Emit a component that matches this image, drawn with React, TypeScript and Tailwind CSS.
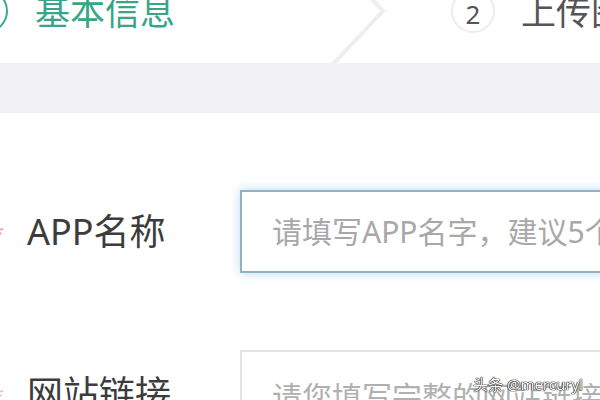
export default function App() {
  const font = "font-['Noto_Sans','Noto_Sans_CJK_SC',sans-serif]";

  return (
    <div className={`relative w-[600px] h-[400px] overflow-hidden bg-white ${font}`}>
      {/* step bar */}
      <div className="relative h-[63px] overflow-hidden bg-white">
        <div className="flex items-center h-[44px] -mt-[11px]">
          <div className="-ml-[36px] w-[44px] h-[44px] shrink-0 rounded-full border-2 border-[#3aa98b]" />
          <span className="ml-[27px] shrink-0 text-[35px] leading-none text-[#38a587]">基本信息</span>
          <div className="ml-[276px] w-[44px] h-[44px] shrink-0 rounded-full border-2 border-[#ececec] flex items-center justify-center pt-[6px] text-[26px] leading-none text-[#555]">
            2
          </div>
          <span className="ml-[26px] shrink-0 whitespace-nowrap text-[35px] leading-none text-[#555]">上传图片</span>
        </div>
        <svg className="absolute left-[300px] top-0" width="100" height="63" viewBox="0 0 100 63">
          <polyline points="60,-14 83,11 18,80" fill="none" stroke="#eeeeee" strokeWidth="4" />
        </svg>
      </div>
      <div className="h-[50px] bg-[#f2f2f5]" />

      {/* form */}
      <div className="flex flex-col">
        <div className="mt-[77px] flex items-center">
          <div className="w-[240px] shrink-0 flex items-center">
            <span className="-ml-[8px] w-[35px] text-[22px] leading-none text-[#f4a0a0]">*</span>
            <span className="text-[36px] leading-none text-[#3c3c3c]">APP名称</span>
          </div>
          <div className="w-[420px] h-[83px] shrink-0 border-2 border-[#8fb3c2] shadow-[0_0_10px_rgba(102,175,233,0.45)] flex items-center pl-[30px]">
            <input
              readOnly
              placeholder="请填写APP名字，建议5个字以内"
              className="w-full bg-transparent outline-none text-[30px] placeholder:text-[#a8a8a8]"
            />
          </div>
        </div>

        <div className="mt-[77px] flex items-start">
          <div className="w-[240px] shrink-0 flex items-center pt-[26px]">
            <span className="-ml-[8px] w-[35px] text-[22px] leading-none text-[#f8c0a0]">*</span>
            <span className="text-[36px] leading-none text-[#3c3c3c]">网站链接</span>
          </div>
          <div className="w-[420px] h-[83px] shrink-0 border-2 border-[#e2e2e2] flex items-start pt-[22px] pl-[30px]">
            <input
              readOnly
              placeholder="请您填写完整的网站链接"
              className="w-full bg-transparent outline-none text-[30px] placeholder:text-[#b0b0b0]"
            />
          </div>
        </div>
      </div>

      {/* watermark */}
      <div className="absolute left-[473px] top-[377px] text-[15px] leading-none text-white [text-shadow:0_0_1px_#000,0_0_1px_#000,0_0_1px_#000]">
        头条 @mercuryl
      </div>
    </div>
  );
}
